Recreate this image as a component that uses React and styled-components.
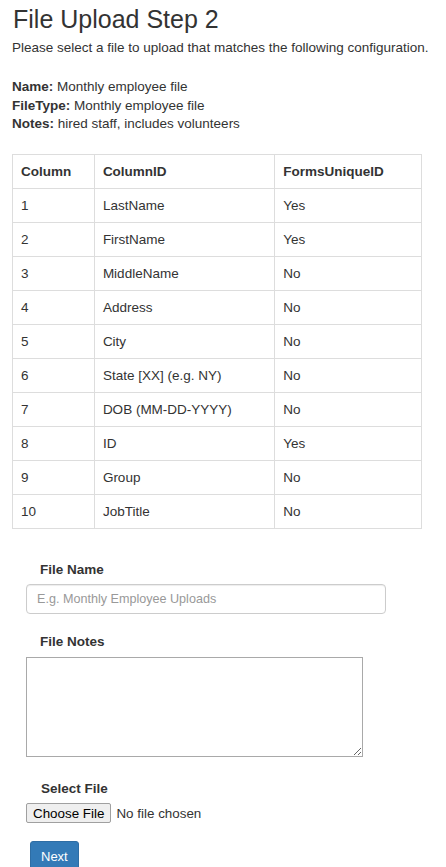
import React from 'react';
import styled, { createGlobalStyle } from 'styled-components';

const GlobalStyle = createGlobalStyle`
  html, body {
    margin: 0;
    padding: 0;
    background: #fff;
  }
  body {
    font-family: "Liberation Sans", Arial, sans-serif;
    font-size: 13.5px;
    line-height: 18.57px;
    color: #333;
  }
  * {
    box-sizing: border-box;
  }
`;

const Page = styled.div`
  padding: 0 12px 40px;
`;

const Title = styled.h3`
  font-size: 25px;
  font-weight: 400;
  line-height: 26.4px;
  margin: 6px 0 7px 1px;
  color: #333;
`;

const Intro = styled.p`
  font-size: 13.5px;
  white-space: nowrap;
  margin: 0 0 20px;
`;

const Details = styled.div`
  margin-bottom: 20px;
`;

const DetailLine = styled.div`
  b {
    font-weight: 700;
  }
`;

const Table = styled.table`
  width: 410px;
  border-collapse: collapse;
  border: 1px solid #ddd;
`;

const Th = styled.th`
  text-align: left;
  font-weight: 700;
  padding: 8px;
  line-height: 17px;
  border: 1px solid #ddd;
  width: ${p => p.$w}px;
`;

const Td = styled.td`
  padding: 8px;
  line-height: 17px;
  border: 1px solid #ddd;
`;

const Form = styled.form`
  margin-top: 32px;
  padding-left: 14px;
`;

const Group = styled.div`
  margin-bottom: ${p => p.$gap}px;
`;

const Label = styled.label`
  display: block;
  font-weight: 700;
  padding-left: ${p => p.$indent || 14}px;
  margin-bottom: 5px;
`;

const TextInput = styled.input`
  display: block;
  width: 360px;
  height: 30px;
  padding: 5px 10px;
  font-family: inherit;
  font-size: 12.6px;
  color: #555;
  border: 1px solid #ccc;
  border-radius: 4px;
  box-shadow: inset 0 1px 1px rgba(0, 0, 0, 0.075);
  outline: none;

  &::placeholder {
    color: #999;
  }
`;

const NotesArea = styled.textarea`
  display: block;
  width: 337px;
  height: 100px;
  border: 1px solid #a9a9a9;
  border-radius: 0;
  font-family: inherit;
  font-size: 13px;
  padding: 2px;
`;

const FileInput = styled.input`
  display: block;
  font-family: "Liberation Sans", Arial, sans-serif;
  font-size: 13.4px;
  color: #333;
  height: 20px;
  line-height: 20px;

  &::file-selector-button {
    font-family: "Liberation Sans", Arial, sans-serif;
    font-size: 13.4px;
    height: 20px;
    padding: 0 6px;
    margin-right: 5px;
    background: #efefef;
    color: #000;
    border: 1px solid #a0a0a0;
    border-radius: 2px;
  }
`;

const NextButton = styled.button`
  margin-left: 4px;
  height: 30px;
  padding: 0 10px;
  font-family: inherit;
  font-size: 13px;
  color: #fff;
  background: #337ab7;
  border: 1px solid #2e6da4;
  border-radius: 3px;
  cursor: pointer;
`;

const rows = [
  ['1', 'LastName', 'Yes'],
  ['2', 'FirstName', 'Yes'],
  ['3', 'MiddleName', 'No'],
  ['4', 'Address', 'No'],
  ['5', 'City', 'No'],
  ['6', 'State [XX] (e.g. NY)', 'No'],
  ['7', 'DOB (MM-DD-YYYY)', 'No'],
  ['8', 'ID', 'Yes'],
  ['9', 'Group', 'No'],
  ['10', 'JobTitle', 'No'],
];

export default function App() {
  return (
    <Page>
      <GlobalStyle />
      <Title>File Upload Step 2</Title>
      <Intro>Please select a file to upload that matches the following configuration.</Intro>

      <Details>
        <DetailLine><b>Name:</b> Monthly employee file</DetailLine>
        <DetailLine><b>FileType:</b> Monthly employee file</DetailLine>
        <DetailLine><b>Notes:</b> hired staff, includes volunteers</DetailLine>
      </Details>

      <Table>
        <thead>
          <tr>
            <Th $w={82}>Column</Th>
            <Th $w={181}>ColumnID</Th>
            <Th $w={147}>FormsUniqueID</Th>
          </tr>
        </thead>
        <tbody>
          {rows.map(r => (
            <tr key={r[0]}>
              <Td>{r[0]}</Td>
              <Td>{r[1]}</Td>
              <Td>{r[2]}</Td>
            </tr>
          ))}
        </tbody>
      </Table>

      <Form onSubmit={e => e.preventDefault()}>
        <Group $gap={19}>
          <Label htmlFor="fileName">File Name</Label>
          <TextInput id="fileName" type="text" placeholder="E.g. Monthly Employee Uploads" />
        </Group>
        <Group $gap={23}>
          <Label htmlFor="fileNotes">File Notes</Label>
          <NotesArea id="fileNotes" />
        </Group>
        <Group $gap={18}>
          <Label htmlFor="fileSelect" $indent={15}>Select File</Label>
          <FileInput id="fileSelect" type="file" />
        </Group>
        <NextButton type="submit">Next</NextButton>
      </Form>
    </Page>
  );
}
